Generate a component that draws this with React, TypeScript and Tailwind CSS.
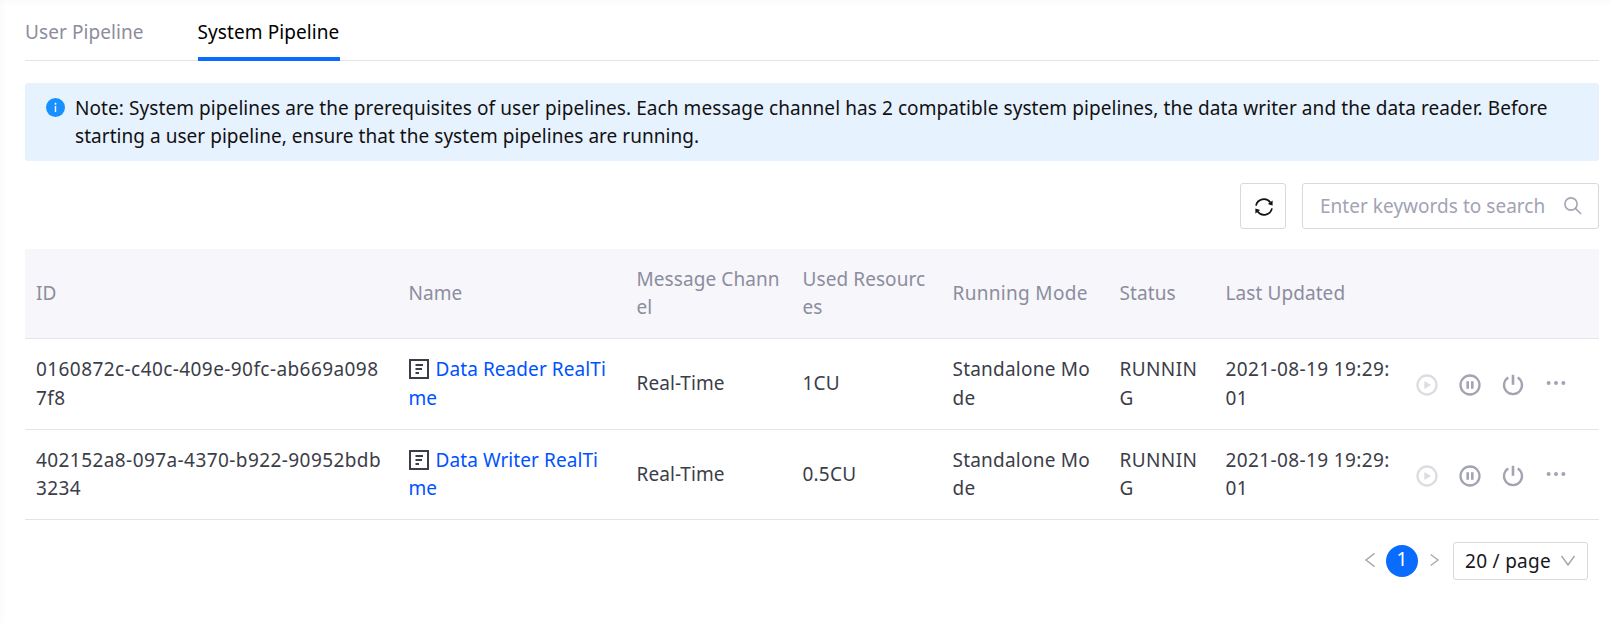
import type { ReactNode } from "react";

const columns = [
  { label: "ID", className: "" },
  { label: "Name", className: "" },
  { label: "Message Chann\nel", className: "" },
  { label: "Used Resourc\nes", className: "" },
  { label: "Running Mode", className: "tracking-[0.32px]" },
  { label: "Status", className: "" },
  { label: "Last Updated", className: "" },
];

const rows = [
  {
    id: "0160872c-c40c-409e-90fc-ab669a098\n7f8",
    name: "Data Reader RealTi\nme",
    used: "1CU",
  },
  {
    id: "402152a8-097a-4370-b922-90952bdb\n3234",
    name: "Data Writer RealTi\nme",
    used: "0.5CU",
  },
];

const grid =
  "grid grid-cols-[372.5px_228px_166px_150px_167px_106px_190.5px_194px] items-center";

function InfoIcon() {
  return (
    <svg viewBox="0 0 19 19" className="mt-[5px] h-[19px] w-[19px] shrink-0">
      <circle cx="9.5" cy="9.5" r="9.5" fill="#1890ff" />
      <rect x="8.7" y="4.8" width="1.6" height="1.9" fill="#fff" />
      <rect x="8.8" y="8" width="1.4" height="6" fill="#fff" />
    </svg>
  );
}

function RefreshIcon() {
  return (
    <svg viewBox="0 0 18 18" className="h-[18px] w-[18px]" fill="none" stroke="#111" strokeWidth="1.7">
      <path d="M1 7.6A8.1 8.1 0 0 1 15.4 4.4" />
      <path d="M17 10.4A8.1 8.1 0 0 1 2.6 13.6" />
      <path d="M17.6 2.6V7.6L12.9 6Z" fill="#111" stroke="none" />
      <path d="M0.4 15.4V10.4L5.1 12Z" fill="#111" stroke="none" />
    </svg>
  );
}

function SearchIcon() {
  return (
    <svg viewBox="0 0 18 18" className="h-[18px] w-[18px]" fill="none" stroke="#a5a5b3" strokeWidth="1.6">
      <circle cx="7" cy="7" r="6.1" />
      <path d="M11.4 11.4L17 17" />
    </svg>
  );
}

function FileIcon() {
  return (
    <svg viewBox="0 0 20 20" className="h-5 w-5 shrink-0" fill="none" stroke="#3b3d49" strokeWidth="2">
      <rect x="1" y="1" width="18" height="18" />
      <path d="M6.5 6H14M6.5 10H13M6.5 14H10" />
    </svg>
  );
}

function PlayIcon() {
  return (
    <svg viewBox="0 0 22 22" className="h-[22px] w-[22px]">
      <circle cx="11" cy="11" r="9.5" fill="none" stroke="#dcdce3" strokeWidth="2.3" />
      <path d="M8.3 6.9L15 11L8.3 15.1Z" fill="#dcdce3" />
    </svg>
  );
}

function PauseIcon() {
  return (
    <svg viewBox="0 0 22 22" className="h-[22px] w-[22px]" stroke="#a2a3b3" fill="none">
      <circle cx="11" cy="11" r="9.5" strokeWidth="2.3" />
      <path d="M8.7 7.3V14.7M13.3 7.3V14.7" strokeWidth="2.6" />
    </svg>
  );
}

function PowerIcon() {
  return (
    <svg viewBox="0 0 22 22" className="h-[22px] w-[22px]" stroke="#a2a3b3" fill="none" strokeWidth="2.3">
      <path d="M6.3 3.4A9 9 0 1 0 15.7 3.4" />
      <path d="M11 0.8V10.8" strokeWidth="2.6" />
    </svg>
  );
}

function MoreIcon() {
  return (
    <svg viewBox="0 0 20 6" className="mb-[4px] ml-px h-[6px] w-5" fill="#a2a3b3">
      <circle cx="2.6" cy="3" r="2" />
      <circle cx="10" cy="3" r="2" />
      <circle cx="17.4" cy="3" r="2" />
    </svg>
  );
}

function Arrow({ d, className }: { d: string; className: string }) {
  return (
    <svg viewBox="0 0 14 14" className={className} fill="none" stroke="#a5a5b3" strokeWidth="1.5">
      <path d={d} />
    </svg>
  );
}

function Cell({ children, className = "" }: { children: ReactNode; className?: string }) {
  return <div className={`pb-px pl-[11px] whitespace-pre ${className}`}>{children}</div>;
}

export default function App() {
  return (
    <div className="h-[623px] w-[1610px] overflow-hidden bg-white pr-[11px] pl-[25px] font-['Noto_Sans','Noto_Sans_CJK_SC',sans-serif] text-[19px] leading-[28px] tracking-[0.08px] text-[#17171c] shadow-[inset_6px_6px_9px_-6px_#f6f6f6]">
      <div className="flex h-[61px] gap-[54px] border-b border-[#e3e3ea]">
        <div className="pt-[18px] text-[#8b8d9d]">User Pipeline</div>
        <div className="-mb-px h-[61px] w-[142px] border-b-4 border-[#0a6cff] pt-[18px] whitespace-nowrap text-black">
          System Pipeline
        </div>
      </div>

      <div className="mt-[22px] flex h-[78px] gap-[10px] rounded-[3px] bg-[#e7f2ff] pt-[10px] pl-[21px]">
        <InfoIcon />
        <div className="pt-[1px] text-[#111]">
          <p>
            Note: System pipelines are the prerequisites of user pipelines. Each message channel has
            2 compatible system pipelines, the data writer and the data reader. Before
          </p>
          <p className="tracking-[0.04px]">
            starting a user pipeline, ensure that the system pipelines are running.
          </p>
        </div>
      </div>

      <div className="mt-[22px] flex h-[46px] justify-end gap-4">
        <button className="flex w-[46px] items-center justify-center rounded-[3px] border border-[#d8d8e0] pt-[2px] pl-px">
          <RefreshIcon />
        </button>
        <div className="flex w-[297px] items-center justify-between rounded-[3px] border border-[#d8d8e0] pr-[16px] pl-[17px] text-[#a2a3b3]">
          <span className="tracking-[0.03px]">Enter keywords to search</span>
          <div className="-mt-px">
            <SearchIcon />
          </div>
        </div>
      </div>

      <div className="mt-5">
        <div className={`${grid} h-[90px] rounded-t-[3px] border-b border-[#e3e3ea] bg-[#f6f6fb] pb-px text-[#8b8d9d]`}>
          {columns.map((c) => (
            <Cell key={c.label} className={c.className}>
              {c.label}
            </Cell>
          ))}
        </div>
        {rows.map((r, i) => (
          <div
            key={r.id}
            className={`${grid} border-b border-[#e3e3ea] text-[#3b3d49] ${i === 0 ? "h-[91px] leading-[29px]" : "h-[90px] leading-[28px]"}`}
          >
            <Cell className="tracking-[0.42px]">{r.id}</Cell>
            <Cell className="text-[#0052ff]">
              <span className="mr-[7px] inline-block align-[-3px] leading-none">
                <FileIcon />
              </span>
              {r.name}
            </Cell>
            <Cell>Real-Time</Cell>
            <Cell className="tracking-[0.2px]">{r.used}</Cell>
            <Cell className="tracking-[0.22px]">{"Standalone Mo\nde"}</Cell>
            <Cell className="tracking-[0.4px]">{"RUNNIN\nG"}</Cell>
            <Cell className="tracking-[0.38px]">{"2021-08-19 19:29:\n01"}</Cell>
            <div className="flex items-center gap-[21px] pt-[2px] pl-[10.5px]">
              <PlayIcon />
              <PauseIcon />
              <PowerIcon />
              <MoreIcon />
            </div>
          </div>
        ))}
      </div>

      <div className="mt-[22px] flex h-[38px] items-center justify-end pr-[11px]">
        <Arrow d="M10.5 0.5L2 7L10.5 13.5" className="mr-[8px] mb-[2px] h-[14px] w-[14px]" />
        <div className="flex h-8 w-8 items-start justify-center rounded-full bg-[#0a6cff] leading-[28px] text-white">
          1
        </div>
        <Arrow d="M2 0.5L10.5 7L2 13.5" className="mr-[12px] mb-[2px] ml-[11px] h-[14px] w-[12px]" />
        <div className="flex h-[38px] w-[135px] items-center justify-between rounded-[3px] border border-[#d8d8e0] pr-[12px] pl-[11px] tracking-[0.29px]">
          <span>20 / page</span>
          <Arrow d="M0.5 2L7 11L13.5 2" className="h-[14px] w-[14px]" />
        </div>
      </div>
    </div>
  );
}
